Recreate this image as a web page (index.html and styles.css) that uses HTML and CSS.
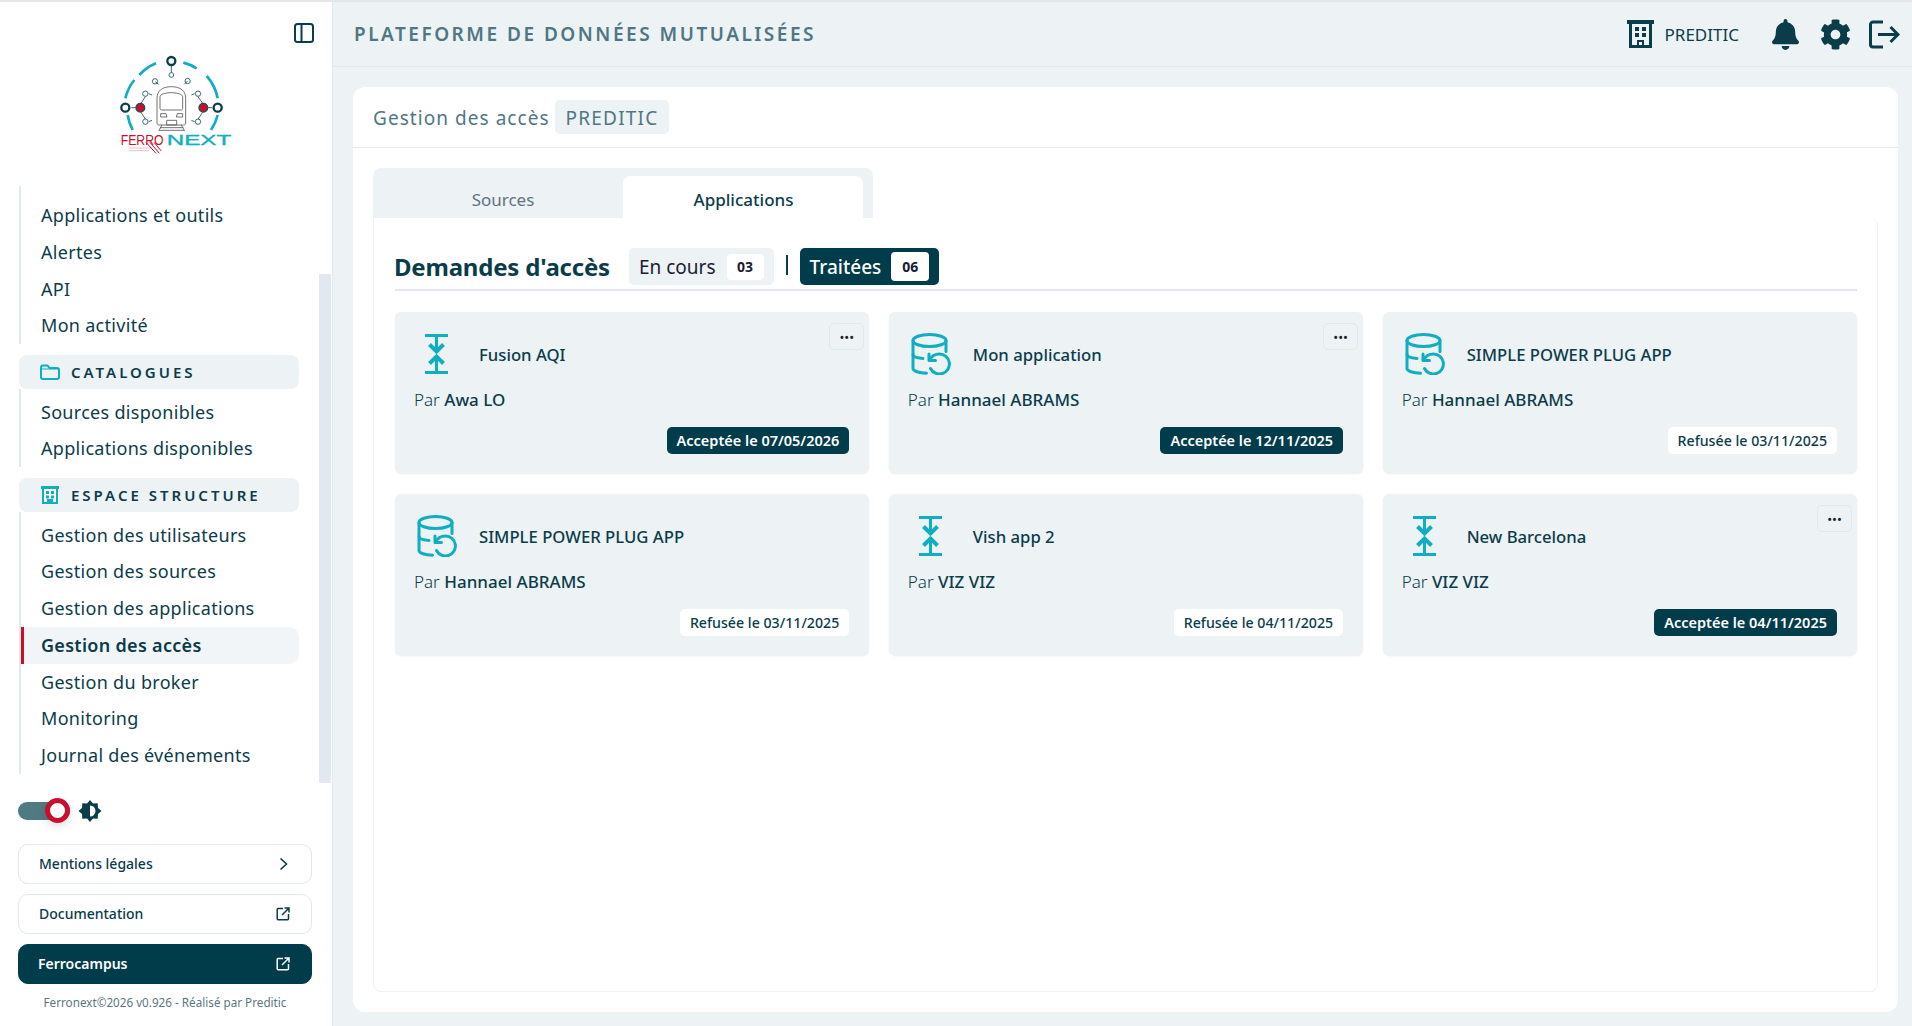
FILE: index.html
```html
<!DOCTYPE html>
<html lang="fr">
<head>
  <meta charset="UTF-8">
  <meta name="viewport" content="width=device-width, initial-scale=1.0">
  <title>Gestion des accès</title>
  <link rel="stylesheet" href="styles.css">
</head>
<body>
  <svg class="sprites" width="0" height="0">
    <symbol id="i-merge" viewBox="0 0 23 40">
      <path d="M0 1.500h23M0 38.500h23M11.500 3v13M11.500 37V24" fill="none" stroke="currentColor" stroke-width="3"/>
      <path d="M4.500 10.500l7 7 7-7M4.500 29.500l7-7 7 7" fill="none" stroke="currentColor" stroke-width="4"/>
    </symbol>
    <symbol id="i-db" viewBox="0 0 40 42">
      <g fill="none" stroke="currentColor" stroke-width="3" stroke-linecap="round" stroke-linejoin="round">
        <ellipse cx="18.500" cy="7.500" rx="16.500" ry="6"/>
        <path d="M2 7.500v28c0 2.500 6 4.500 13.500 4.800"/>
        <path d="M35 7.500v11"/>
        <path d="M2 21.500c0 2.300 4 3.500 10 4"/>
        <path d="M18 21v6.500h6.500"/>
        <path d="M18.500 27c2-4 6-6 10-6a10 10 0 1 1-9 14.500"/>
      </g>
    </symbol>
    <symbol id="i-open" viewBox="0 0 14 14">
      <path d="M7 1.500H2.200a1 1 0 0 0-1 1v9.300a1 1 0 0 0 1 1h9.300a1 1 0 0 0 1-1V7M6 8l6.500-6.500M8.500 1h4.500v4.500" fill="none" stroke="currentColor" stroke-width="1.500"/>
    </symbol>
  </svg>

  <aside class="sidebar">
    <button class="panel-btn" type="button" aria-label="Réduire">
      <svg width="20" height="20" viewBox="0 0 20 20"><rect x="1" y="1" width="18" height="18" rx="2.500" fill="none" stroke="currentColor" stroke-width="2"/><path d="M7.500 1v18" stroke="currentColor" stroke-width="2"/></svg>
    </button>

    <div class="logo">
      <svg width="114" height="100" viewBox="0 0 340 300">
        <g fill="none" stroke="#0faec1" stroke-width="8">
          <path d="M110 25A137 137 0 0 0 60 60M45 75A137 137 0 0 0 18 130M25 180A137 137 0 0 0 40 225"/>
          <path d="M192 23A137 137 0 0 1 232 40M262 63A137 137 0 0 1 295 130M295 180A137 137 0 0 1 275 225"/>
        </g>
        <g fill="none" stroke="#1d4b58" stroke-width="2.500">
          <path d="M156 31v22M63 158H36M252 158h27M118 88l-10-8M195 88l10-10M65 145l13-20M250 145l-14-20M65 172l13 20M250 172l-14 20M88 116l10 4M226 116l-10 4M88 200l10-4M226 200l-10-4"/>
          <circle cx="156" cy="60" r="7"/><circle cx="107" cy="79" r="8"/><circle cx="205" cy="78" r="8"/>
          <circle cx="78" cy="116" r="8"/><circle cx="236" cy="116" r="8"/><circle cx="78" cy="200" r="8"/><circle cx="236" cy="200" r="8"/>
        </g>
        <g fill="#fff" stroke="#0b3c49" stroke-width="7">
          <circle cx="156" cy="18" r="12"/><circle cx="18" cy="158" r="12"/><circle cx="295" cy="158" r="12"/>
        </g>
        <g fill="#c8102e" stroke="#1d4b58" stroke-width="4">
          <circle cx="63" cy="158" r="13"/><circle cx="252" cy="158" r="13"/>
        </g>
        <g fill="none" stroke="#555" stroke-width="2.500">
          <path d="M113 205V130c0-22 15-35 43-35s43 13 43 35v75c0 4-3 5-6 5h-74c-3 0-6-1-6-5z"/>
          <path d="M122 125c0-6 14-12 34-12s34 6 34 12v35c0 3-2 5-5 5h-58c-3 0-5-2-5-5z"/>
          <path d="M124 176h16l3 10h-19zM190 176h-16l-3 10h19zM142 196h30v14h-30zM118 228l10-18M196 228l-10-18M122 218h70M120 226h74"/>
        </g>
        <text class="logo-ferro" transform="translate(4 270) scale(0.800 1)">FERRO</text>
        <text class="logo-next" transform="translate(142 270) scale(1.580 1)">NEXT</text>
        <path d="M28 279h70M28 287h60" stroke="#e79aa8" stroke-width="2"/>
        <path d="M80 262l30 33M92 262l28 33M104 262l22 26" stroke="#c8102e" stroke-width="3" fill="none"/>
      </svg>
    </div>

    <nav class="nav">
      <ul class="nav-list first">
        <li class="nav-item">Applications et outils</li>
        <li class="nav-item">Alertes</li>
        <li class="nav-item">API</li>
        <li class="nav-item">Mon activité</li>
      </ul>
      <div class="nav-head">
        <svg width="20" height="16" viewBox="0 0 20 16"><path d="M1 3.500c0-1.200.8-2 2-2h4.500l2 2.500H17c1.200 0 2 .8 2 2v7c0 1.200-.8 2-2 2H3c-1.200 0-2-.8-2-2z" fill="none" stroke="#0faec1" stroke-width="2"/><path d="M1 5h18" stroke="#0faec1" stroke-width="1"/></svg>
        CATALOGUES
      </div>
      <ul class="nav-list">
        <li class="nav-item">Sources disponibles</li>
        <li class="nav-item">Applications disponibles</li>
      </ul>
      <div class="nav-head">
        <svg width="20" height="20" viewBox="0 0 20 20"><path d="M1 1h18v3h-1v15H2V4H1z" fill="#0faec1"/><path d="M4 4h12v13h-3v-3H7v3H4z" fill="#fff"/><path d="M6 6h3v3H6zM11 6h3v3h-3zM6 10.500h3v3H6zM11 10.500h3v3h-3z" fill="#0faec1"/></svg>
        ESPACE STRUCTURE
      </div>
      <ul class="nav-list">
        <li class="nav-item">Gestion des utilisateurs</li>
        <li class="nav-item">Gestion des sources</li>
        <li class="nav-item">Gestion des applications</li>
        <li class="nav-item active">Gestion des accès</li>
        <li class="nav-item">Gestion du broker</li>
        <li class="nav-item">Monitoring</li>
        <li class="nav-item">Journal des événements</li>
      </ul>
      <span class="scroll-thumb"></span>
    </nav>

    <div class="theme">
      <span class="switch"><span class="knob"></span></span>
      <svg width="24" height="24" viewBox="0 0 24 24"><path d="M12 1l3 3.500 4.700-.2.300 4.700L23.500 12 20 15l-.3 4.700-4.700-.2-3 3.500-3-3.500-4.700.2L4 15 .5 12 4 9l.3-4.700 4.700.2z" fill="#0b3c49"/><path d="M12 6.500a5.500 5.500 0 0 1 0 11z" fill="#fff"/></svg>
    </div>

    <div class="side-links">
      <a class="side-link">Mentions légales
        <svg width="14" height="14" viewBox="0 0 14 14"><path d="M4.500 1.500l6 5.500-6 5.500" fill="none" stroke="currentColor" stroke-width="1.600"/></svg>
      </a>
      <a class="side-link">Documentation
        <svg width="14" height="14"><use href="#i-open"/></svg>
      </a>
      <a class="side-link dark">Ferrocampus
        <svg width="14" height="14"><use href="#i-open"/></svg>
      </a>
    </div>
    <p class="side-foot">Ferronext©2026 v0.926 - Réalisé par Preditic</p>
  </aside>

  <div class="page">
    <header class="topbar">
      <h1 class="app-title">PLATEFORME DE DONNÉES MUTUALISÉES</h1>
      <div class="top-actions">
        <svg class="ic-building" width="27" height="28" viewBox="0 0 27 28"><path d="M0 0h27v4h-2v24H2V4H0z" fill="#0b3c49"/><path d="M5 4h17v21h-5v-5h-7v5H5z" fill="#edf2f5"/><path d="M8 7h4v4H8zM15 7h4v4h-4zM8 13h4v4H8zM15 13h4v4h-4z" fill="#0b3c49"/><path d="M12 22h3v3h-3z" fill="#edf2f5"/></svg>
        <span class="org-name">PREDITIC</span>
        <svg class="ic-bell" width="27" height="31" viewBox="0 0 448 512"><path fill="#0b3c49" d="M224 512c35.320 0 63.970-28.650 63.970-64H160.030c0 35.350 28.650 64 63.970 64zm215.390-149.710c-19.320-20.760-55.470-51.990-55.470-154.290 0-77.700-54.480-139.900-127.940-155.160V32c0-17.670-14.320-32-31.980-32s-31.980 14.330-31.980 32v20.840C118.560 68.100 64.080 130.300 64.080 208c0 102.300-36.150 133.530-55.470 154.290-6 6.450-8.660 14.160-8.610 21.710.11 16.400 12.980 32 32.100 32h383.800c19.120 0 32-15.600 32.100-32 .05-7.550-2.610-15.270-8.610-21.710z"/></svg>
        <svg class="ic-gear" width="31" height="31" viewBox="0 0 512 512"><path fill="#0b3c49" d="M487.400 315.700l-42.600-24.600c4.300-23.200 4.300-47 0-70.200l42.600-24.600c4.900-2.800 7.100-8.600 5.500-14-11.100-35.600-30-67.800-54.700-94.600-3.800-4.100-10-5.100-14.800-2.300L380.800 110c-17.900-15.400-38.500-27.300-60.800-35.100V25.800c0-5.600-3.900-10.500-9.400-11.700-36.700-8.200-74.300-7.800-109.200 0-5.500 1.200-9.400 6.100-9.400 11.700V75c-22.200 7.900-42.800 19.800-60.800 35.100L88.700 85.500c-4.900-2.800-11-1.900-14.800 2.300-24.700 26.700-43.600 58.900-54.700 94.600-1.700 5.400.6 11.200 5.500 14L67.300 221c-4.300 23.200-4.300 47 0 70.200l-42.600 24.600c-4.900 2.800-7.100 8.600-5.500 14 11.100 35.600 30 67.800 54.700 94.600 3.800 4.100 10 5.100 14.800 2.300l42.600-24.600c17.900 15.400 38.500 27.300 60.800 35.100v49.200c0 5.600 3.900 10.500 9.400 11.700 36.700 8.200 74.300 7.800 109.200 0 5.500-1.200 9.400-6.100 9.400-11.700v-49.200c22.200-7.900 42.800-19.800 60.800-35.100l42.600 24.600c4.900 2.800 11 1.900 14.800-2.300 24.700-26.700 43.600-58.900 54.700-94.600 1.500-5.500-.7-11.300-5.600-14.100zM256 336c-44.100 0-80-35.900-80-80s35.900-80 80-80 80 35.900 80 80-35.900 80-80 80z"/></svg>
        <svg class="ic-out" width="31" height="29" viewBox="0 0 31 29"><path d="M14 2H4a2.500 2.500 0 0 0-2.500 2.500v20A2.500 2.500 0 0 0 4 27h10M9 14.500h20M21.500 7l7.500 7.500L21.500 22" fill="none" stroke="#0b3c49" stroke-width="3"/></svg>
      </div>
    </header>

    <main class="panel">
      <div class="panel-head">
        <span class="panel-title">Gestion des accès</span>
        <span class="chip">PREDITIC</span>
      </div>
      <div class="panel-body">
        <div class="tabs">
          <div class="tab">Sources</div>
          <div class="tab current">Applications</div>
        </div>
        <section class="tab-box">
          <div class="list-head">
            <h2 class="list-title">Demandes d'accès</h2>
            <div class="pill">En cours <span class="count">03</span></div>
            <span class="sep"></span>
            <div class="pill on">Traitées <span class="count">06</span></div>
          </div>

          <div class="cards">
            <article class="card">
              <button class="more" type="button">•••</button>
              <div class="card-head">
                <svg class="ic-merge" width="23" height="40"><use href="#i-merge"/></svg>
                <span class="card-name">Fusion AQI</span>
              </div>
              <p class="card-by">Par <b>Awa LO</b></p>
              <span class="badge ok">Acceptée le 07/05/2026</span>
            </article>
            <article class="card">
              <button class="more" type="button">•••</button>
              <div class="card-head">
                <svg class="ic-db" width="40" height="42"><use href="#i-db"/></svg>
                <span class="card-name">Mon application</span>
              </div>
              <p class="card-by">Par <b>Hannael ABRAMS</b></p>
              <span class="badge ok">Acceptée le 12/11/2025</span>
            </article>
            <article class="card">
              <div class="card-head">
                <svg class="ic-db" width="40" height="42"><use href="#i-db"/></svg>
                <span class="card-name">SIMPLE POWER PLUG APP</span>
              </div>
              <p class="card-by">Par <b>Hannael ABRAMS</b></p>
              <span class="badge">Refusée le 03/11/2025</span>
            </article>
            <article class="card">
              <div class="card-head">
                <svg class="ic-db" width="40" height="42"><use href="#i-db"/></svg>
                <span class="card-name">SIMPLE POWER PLUG APP</span>
              </div>
              <p class="card-by">Par <b>Hannael ABRAMS</b></p>
              <span class="badge">Refusée le 03/11/2025</span>
            </article>
            <article class="card">
              <div class="card-head">
                <svg class="ic-merge" width="23" height="40"><use href="#i-merge"/></svg>
                <span class="card-name">Vish app 2</span>
              </div>
              <p class="card-by">Par <b>VIZ VIZ</b></p>
              <span class="badge">Refusée le 04/11/2025</span>
            </article>
            <article class="card">
              <button class="more" type="button">•••</button>
              <div class="card-head">
                <svg class="ic-merge" width="23" height="40"><use href="#i-merge"/></svg>
                <span class="card-name">New Barcelona</span>
              </div>
              <p class="card-by">Par <b>VIZ VIZ</b></p>
              <span class="badge ok">Acceptée le 04/11/2025</span>
            </article>
          </div>
        </section>
      </div>
    </main>
  </div>
</body>
</html>
```

FILE: styles.css
```css
* {
  box-sizing: border-box;
}

body {
  font-family: "Noto Sans", Arial, sans-serif;
  margin: 0;
  height: 100vh;
  overflow: hidden;
  display: flex;
  color: #0b3c49;
  background-color: #edf2f5;
  border-top: 2px solid #e4e6e7;
}

.sprites {
  position: absolute;
}

/* sidebar */
.sidebar {
  width: 333px;
  flex-shrink: 0;
  background-color: #fff;
  border-right: 1px solid #e2e8f0;
  display: flex;
  flex-direction: column;
}

.panel-btn {
  align-self: flex-end;
  margin: 21px 18px 0 0;
  padding: 0;
  height: 20px;
  border: 0;
  background: none;
  color: #0b3c49;
}

.logo {
  margin: 12px 0 0 119px;
  height: 100px;
}

.logo-ferro,
.logo-next {
  font-family: "Liberation Sans", Arial, sans-serif;
  font-size: 46px;
}

.logo-ferro {
  fill: #c8102e;
}

.logo-next {
  fill: #0faec1;
  stroke: #0faec1;
  stroke-width: 1px;
}

.nav {
  position: relative;
  margin: 31px 0 0 19px;
  width: 280px;
}

.nav-list {
  list-style: none;
  margin: 0;
  padding: 5px 0 0;
  border-left: 2px solid #e2e8f0;
}

.nav-list.first {
  padding-top: 11px;
}

.nav-item {
  height: 36.750px;
  line-height: 36px;
  padding-left: 20px;
  font-size: 18px;
  letter-spacing: 0.300px;
}

.nav-item.active {
  padding-left: 17px;
  border-left: 3px solid #c8102e;
  border-radius: 0 10px 10px 0;
  background-color: #f1f5f8;
  font-weight: 600;
}

.nav-head {
  height: 34px;
  margin: 10.500px 0 0;
  padding-left: 21px;
  display: flex;
  align-items: center;
  gap: 11px;
  border-radius: 8px;
  background-color: #edf2f5;
  font-size: 15px;
  font-weight: 600;
  letter-spacing: 3px;
}

.scroll-thumb {
  position: absolute;
  left: 300px;
  top: 88px;
  width: 12px;
  height: 509px;
  background-color: #e2e8f0;
}

.theme {
  display: flex;
  align-items: center;
  gap: 8px;
  margin: 25px 0 0 18px;
  height: 24px;
}

.switch {
  position: relative;
  display: block;
  width: 52px;
  height: 18px;
  border-radius: 9px;
  background-color: #4f7a82;
}

.knob {
  position: absolute;
  right: 0;
  top: -3.500px;
  width: 25px;
  height: 25px;
  border: 5px solid #c8102e;
  border-radius: 50%;
  background-color: #fff;
  box-shadow: 0 4px 8px rgba(0, 0, 0, 0.12);
}

.side-links {
  margin: 21px 0 0 18px;
  width: 294px;
  display: flex;
  flex-direction: column;
  gap: 10px;
}

.side-link {
  height: 40px;
  padding: 0 21px 0 20px;
  display: flex;
  align-items: center;
  justify-content: space-between;
  border: 1px solid #e2e8f0;
  border-radius: 10px;
  font-size: 14px;
  font-weight: 500;
}

.side-link.dark {
  padding-left: 19px;
  background-color: #013c4a;
  border-color: #013c4a;
  color: #fff;
  font-weight: 600;
}

.side-foot {
  margin: 10px 0 0 18px;
  width: 294px;
  text-align: center;
  font-size: 11.700px;
  color: #5b7680;
}

/* top bar */
.page {
  flex: 1;
  min-width: 0;
  display: flex;
  flex-direction: column;
}

.topbar {
  height: 65px;
  flex-shrink: 0;
  padding: 0 12px 0 21px;
  display: flex;
  align-items: center;
  justify-content: space-between;
  border-bottom: 1px solid #e2e8f0;
}

.app-title {
  margin: 0;
  font-size: 19px;
  font-weight: 600;
  letter-spacing: 2.500px;
  color: #4f7783;
}

.top-actions {
  display: flex;
  align-items: center;
}

.org-name {
  margin: 0 33px 0 11px;
  font-size: 17px;
}

.ic-gear {
  margin: 0 18px 0 21px;
}

/* panel */
.panel {
  flex: 1;
  margin: 20px 14px 14px 20px;
  background-color: #fff;
  border-radius: 12px;
  display: flex;
  flex-direction: column;
}

.panel-head {
  height: 61px;
  flex-shrink: 0;
  padding-left: 20px;
  display: flex;
  align-items: center;
  gap: 5px;
  border-bottom: 1px solid #e2e8f0;
  color: #4f7783;
}

.panel-title {
  margin-top: 2px;
  font-size: 19px;
  letter-spacing: 1.050px;
}

.chip {
  padding: 0 11px;
  height: 34px;
  line-height: 36px;
  border-radius: 5px;
  background-color: #edf2f5;
  font-size: 19px;
  letter-spacing: 1.200px;
}

.panel-body {
  flex: 1;
  padding: 20px;
  display: flex;
  flex-direction: column;
}

.tabs {
  width: 500px;
  height: 50px;
  padding: 8px 10px 0 0;
  display: flex;
  border-radius: 8px 8px 0 0;
  background-color: #edf2f5;
  font-size: 17px;
  text-align: center;
}

.tab {
  width: 250px;
  padding-left: 10px;
  line-height: 47px;
  color: #5f7380;
}

.tab.current {
  width: 240px;
  padding-left: 1px;
  border-radius: 8px 8px 0 0;
  background-color: #fff;
  color: #0b3c49;
  font-weight: 500;
}

.tab-box {
  flex: 1;
  padding: 0 20px 0 21px;
  border: 1px solid #edf2f5;
  border-top: 0;
  border-radius: 0 8px 8px 8px;
}

.list-head {
  height: 73px;
  padding-top: 30px;
  display: flex;
  align-items: flex-start;
  border-bottom: 2px solid #e2e8f0;
}

.list-title {
  margin: 0 20px 0 -1px;
  width: 215px;
  font-size: 24px;
  line-height: 37px;
  font-weight: 700;
  letter-spacing: -0.200px;
  white-space: nowrap;
}

.pill {
  height: 37px;
  padding: 0 10px;
  display: flex;
  align-items: center;
  gap: 11px;
  border-radius: 5px;
  background-color: #edf2f5;
  font-size: 19px;
  color: #1b1b33;
}

.pill.on {
  gap: 10px;
  background-color: #013c4a;
  color: #fff;
  font-weight: 500;
}

.pill.on .count {
  min-width: 38px;
  height: 29px;
  line-height: 29px;
}

.sep {
  width: 2px;
  height: 20px;
  margin: 7px 12px 0 12px;
  background-color: #0b3c49;
}

.count {
  min-width: 37px;
  height: 26px;
  line-height: 26px;
  text-align: center;
  border-radius: 4px;
  background-color: #fff;
  color: #1b1b33;
  font-size: 14px;
  font-weight: 700;
}

.cards {
  margin-top: 21px;
  display: grid;
  grid-template-columns: repeat(3, 1fr);
  column-gap: 19.500px;
  row-gap: 21px;
}

.card {
  position: relative;
  height: 161px;
  padding: 21px 20px 19px 19px;
  display: flex;
  flex-direction: column;
  border-radius: 6px;
  background-color: #edf2f5;
  box-shadow: 0 1px 2px rgba(0, 0, 0, 0.08);
}

.card-head {
  height: 42px;
  padding-left: 3px;
  display: flex;
  align-items: center;
}

.ic-merge {
  margin: 0 31px 0 8px;
  color: #0faec1;
}

.ic-db {
  margin-right: 22px;
  color: #0faec1;
}

.card-name {
  font-size: 16.700px;
  font-weight: 500;
}

.card-by {
  margin: 13px 0 0;
  font-size: 17px;
  font-weight: 300;
}

.card-by b {
  font-weight: 500;
}

.badge {
  margin-top: auto;
  align-self: flex-end;
  height: 27px;
  padding: 0 10px;
  line-height: 27px;
  border-radius: 5px;
  background-color: #fff;
  font-size: 14.200px;
  font-weight: 500;
}

.badge.ok {
  background-color: #013c4a;
  color: #fff;
  font-size: 14.500px;
  font-weight: 600;
}

.more {
  position: absolute;
  top: 11px;
  right: 5px;
  width: 35px;
  height: 27px;
  padding: 0;
  border: 1px solid #e2e8f0;
  border-radius: 5px;
  background: none;
  color: #1b1b33;
  font-size: 13px;
  line-height: 20px;
  font-family: inherit;
}
```
